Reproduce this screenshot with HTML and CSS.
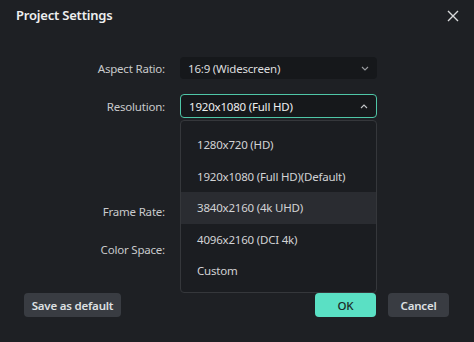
FILE: index.html
```html
<!DOCTYPE html>
<html>
<head>
<meta charset="utf-8">
<link rel="stylesheet" href="styles.css">
</head>
<body>
<div class="dialog">
  <div class="header">
    <div class="title">Project Settings</div>
    <svg class="close" width="12" height="12" viewBox="0 0 12 12"><path d="M1 1L11 11M11 1L1 11" stroke="#d8d9db" stroke-width="1.4" fill="none"/></svg>
  </div>
  <div class="form">
    <div class="row r1">
      <div class="label">Aspect Ratio:</div>
      <div class="select">
        <span>16:9 (Widescreen)</span>
        <svg class="chev" width="8" height="5" viewBox="0 0 8 5"><path d="M1 1L4 4L7 1" stroke="#9a9ca0" stroke-width="1.1" fill="none"/></svg>
      </div>
    </div>
    <div class="row r2">
      <div class="label">Resolution:</div>
      <div class="select open">
        <span>1920x1080 (Full HD)</span>
        <svg class="chev" width="8" height="5" viewBox="0 0 8 5"><path d="M1 4L4 1L7 4" stroke="#c4c6c9" stroke-width="1.1" fill="none"/></svg>
        <div class="menu">
          <div class="item">1280x720 (HD)</div>
          <div class="item">1920x1080 (Full HD)(Default)</div>
          <div class="item active">3840x2160 (4k UHD)</div>
          <div class="item">4096x2160 (DCI 4k)</div>
          <div class="item">Custom</div>
        </div>
      </div>
    </div>
    <div class="row filler"></div>
    <div class="row r3">
      <div class="label">Frame Rate:</div>
      <div class="field"></div>
    </div>
    <div class="row r4">
      <div class="label">Color Space:</div>
      <div class="field"></div>
    </div>
  </div>
  <div class="footer">
    <button class="btn secondary">Save as default</button>
    <div class="right">
      <button class="btn primary">OK</button>
      <button class="btn secondary">Cancel</button>
    </div>
  </div>
</div>
</body>
</html>
```

FILE: styles.css
```css
* { box-sizing: border-box; }
html, body {
  margin: 0;
  padding: 0;
  background: #1e2024;
}
body {
  font-family: "Noto Sans", "Open Sans", sans-serif;
  color: #d6d7d9;
  width: 474px;
  height: 342px;
  overflow: hidden;
  letter-spacing: -0.2px;
}
.dialog {
  width: 474px;
  height: 342px;
  display: flex;
  flex-direction: column;
  background: #1e2024;
}
.header {
  height: 30px;
  padding: 0 15px 0 16px;
  display: flex;
  align-items: center;
  justify-content: space-between;
}
.title {
  font-size: 13px;
  font-weight: 600;
  color: #eeeff0;
}
.close { display: block; margin-top: 1px; }
.form {
  padding-top: 27px;
  display: flex;
  flex-direction: column;
  gap: 16px;
}
.row {
  display: grid;
  grid-template-columns: 165px 197px;
  column-gap: 15px;
  align-items: center;
}
.r1, .r3, .r4 { height: 22px; }
.r2 { height: 24px; margin-top: -1px; }
.filler { height: 50px; }
.label {
  text-align: right;
  font-size: 11.5px;
  color: #c9cacc;
}
.select {
  position: relative;
  height: 100%;
  background: #16181b;
  border-radius: 4px;
  display: flex;
  align-items: center;
  justify-content: space-between;
  padding: 0 8px 0 8px;
  font-size: 11.5px;
  color: #dcdddf;
}
.select.open {
  border: 1px solid #4fc6a7;
  padding-left: 8px;
  color: #eeeff0;
}
.chev { display: block; }
.menu {
  position: absolute;
  top: 25px;
  left: -1px;
  width: 197px;
  height: 173px;
  background: #1b1d21;
  border: 1px solid #35373b;
  border-radius: 4px;
  padding-top: 8px;
  z-index: 2;
}
.item {
  height: 31.5px;
  line-height: 31.5px;
  padding-left: 16px;
  font-size: 11.5px;
  color: #d2d3d5;
}
.item.active { background: #2a2c31; }
.footer {
  margin-top: 33px;
  padding: 0 25px 0 24px;
  display: flex;
  justify-content: space-between;
  align-items: center;
}
.right { display: flex; gap: 12px; }
.btn {
  font-family: inherit;
  letter-spacing: -0.2px;
  height: 24px;
  border: none;
  border-radius: 4px;
  font-size: 11.5px;
  font-weight: 600;
  padding: 0;
}
.secondary {
  background: #393c42;
  color: #dfe0e2;
}
.footer > .secondary { width: 97px; }
.right .btn { width: 61px; }
.primary {
  background: #5ae0c4;
  color: #1c2a27;
  font-weight: 500;
}
```
